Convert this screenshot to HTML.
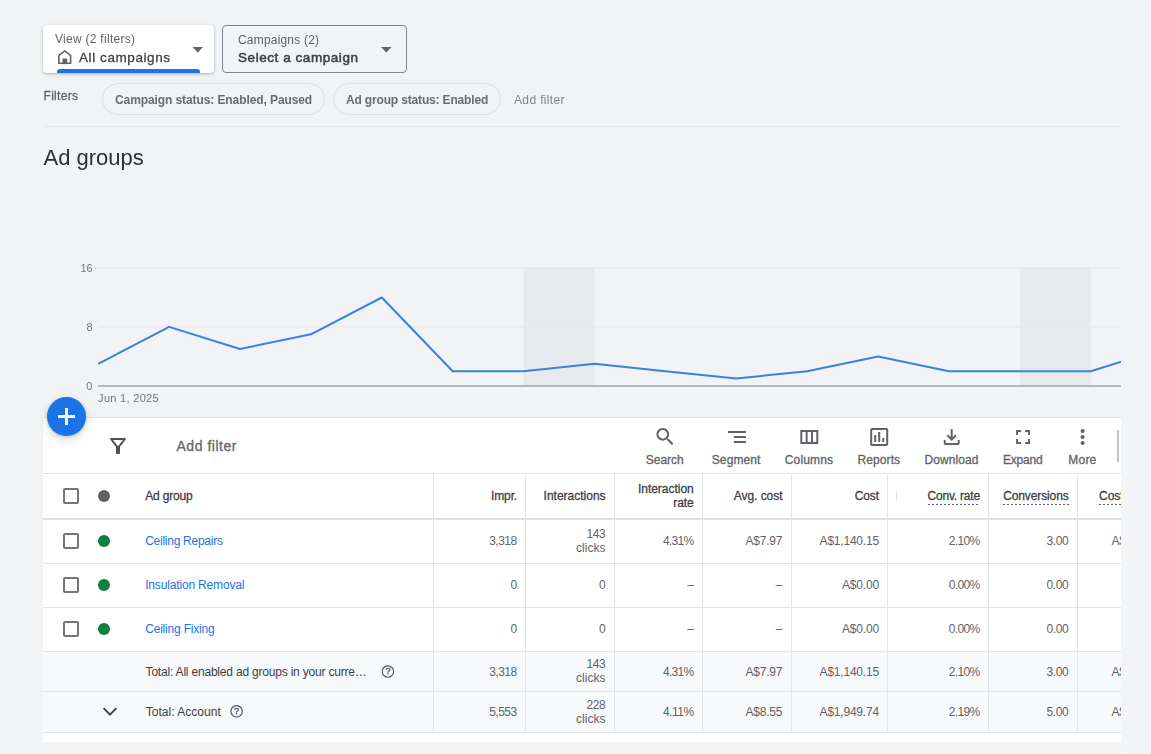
<!DOCTYPE html>
<html><head><meta charset="utf-8">
<style>
html,body{margin:0;padding:0;}
body{width:1151px;height:754px;overflow:hidden;background:#f1f3f4;font-family:"Liberation Sans",sans-serif;position:relative;}
#clip{filter:blur(0.45px);position:absolute;left:0;top:0;width:1121px;height:754px;overflow:hidden;}
#wide{position:absolute;left:0;top:0;width:2000px;height:754px;}
.t{position:absolute;white-space:nowrap;}
.a{position:absolute;}
.vl{position:absolute;width:1px;background:#e3e5e8;top:474px;height:259px;}
.hl{position:absolute;left:43px;width:1078px;height:1px;background:#e2e4e7;}
.cb{position:absolute;left:62.5px;width:12px;height:12px;border:2px solid #757575;border-radius:2px;background:#fff;}
.dot{position:absolute;left:98px;width:12px;height:12px;border-radius:50%;background:#0f8040;}
.ul{position:absolute;height:1.4px;background:repeating-linear-gradient(90deg,#5f6368 0 2px,transparent 2px 4px);top:503.6px;}
</style></head><body>
<div class="a" style="left:1121px;top:424px;width:7px;height:330px;background:#f4f5f7;"></div>
<div id="clip"><div id="wide">

<!-- top selectors -->
<div class="a" style="left:43px;top:25px;width:171px;height:48px;background:#fff;border-radius:4px;box-shadow:0 1px 2px rgba(60,64,67,.22),0 1px 3px 1px rgba(60,64,67,.12);"></div>
<div class="a" style="left:57px;top:69px;width:143px;height:4px;background:#1a73e8;border-radius:3px 3px 0 0;"></div>
<div class="a" style="left:222px;top:25px;width:183px;height:45.5px;border:1px solid #80868b;border-radius:4px;"></div>
<svg class="a" style="left:0;top:0" width="1121" height="130" viewBox="0 0 1121 130">
  <path d="M192.5 47h10.5l-5.25 5.5z" fill="#5f6368"/>
  <path d="M381 47h10.5l-5.25 5.5z" fill="#5f6368"/>
  <!-- home icon -->
  <path d="M58.9 63.3V55.3L64.75 50.9L70.6 55.3V63.3Z" fill="none" stroke="#5f6368" stroke-width="1.6" stroke-linejoin="miter"/>
  <rect x="62.5" y="58.5" width="4.7" height="5.6" fill="#5f6368"/>
</svg>
<!-- chips -->
<div class="a" style="left:101.8px;top:83.2px;width:221px;height:29.6px;border:1px solid #dddfe3;border-radius:16px;"></div>
<div class="a" style="left:332.8px;top:83.2px;width:166.7px;height:29.6px;border:1px solid #dddfe3;border-radius:16px;"></div>
<div class="a" style="left:43.5px;top:125.5px;width:1078px;height:1px;background:#e3e5e8;"></div>

<!-- chart -->
<svg class="a" style="left:0;top:250px" width="1121" height="160" viewBox="0 250 1121 160">
  <rect x="523.7" y="267.6" width="70.7" height="117.6" fill="#e8e9ec"/>
  <rect x="1020.2" y="267.6" width="70.7" height="117.6" fill="#e8e9ec"/>
  <rect x="98" y="267.5" width="1023" height="1" fill="#e6e7ea"/>
  <rect x="98" y="326.4" width="1023" height="1" fill="#e6e7ea"/>
  <rect x="98" y="385" width="1023" height="2" fill="#b5b7b9"/>
  <polyline fill="none" stroke="#3b82e0" stroke-width="2" stroke-linejoin="round" points="98.2,363.8 169.1,326.9 240.0,349.0 310.9,334.3 381.8,297.5 452.7,371.2 523.6,371.2 594.5,363.8 665.4,371.2 736.3,378.5 807.2,371.2 878.1,356.4 949.0,371.2 1019.9,371.2 1090.8,371.2 1161.7,349.0"/>
</svg>

<!-- table panel -->
<div class="a" style="left:43px;top:417px;width:1078px;height:325px;background:#fff;"></div>
<div class="hl" style="top:417px;background:#e3e5e8;"></div>
<div class="a" style="left:43px;top:652px;width:1078px;height:81px;background:#f8f9fa;"></div>
<div class="hl" style="top:473px;"></div>
<div class="hl" style="top:517.5px;height:2px;background:#dddfe3;"></div>
<div class="hl" style="top:563px;"></div>
<div class="hl" style="top:607px;"></div>
<div class="hl" style="top:651px;"></div>
<div class="hl" style="top:691px;"></div>
<div class="hl" style="top:732px;"></div>
<div class="vl" style="left:433px;"></div>
<div class="vl" style="left:525.3px;"></div>
<div class="vl" style="left:614px;"></div>
<div class="vl" style="left:702.3px;"></div>
<div class="vl" style="left:790.5px;"></div>
<div class="vl" style="left:887px;"></div>
<div class="vl" style="left:988.2px;"></div>
<div class="vl" style="left:1077.2px;"></div>
<div class="a" style="left:896px;top:491.5px;width:1px;height:8px;background:#dcdee2;"></div>
<div class="a" style="left:1117.3px;top:430px;width:1.7px;height:31.5px;background:#c0c2c4;"></div>

<!-- checkboxes / dots -->
<div class="cb" style="top:488px;"></div>
<div class="cb" style="top:533.3px;"></div>
<div class="cb" style="top:577.4px;"></div>
<div class="cb" style="top:621.4px;"></div>
<div class="dot" style="top:490px;background:#5f6368;"></div>
<div class="dot" style="top:535.3px;"></div>
<div class="dot" style="top:579.4px;"></div>
<div class="dot" style="top:623.4px;"></div>

<!-- underlines -->
<div class="ul" style="left:927.5px;width:52.6px;"></div>
<div class="ul" style="left:1003.2px;width:65.5px;"></div>
<div class="ul" style="left:1099.1px;width:62px;"></div>

<!-- icons -->
<svg class="a" style="left:0;top:417px" width="1121" height="337" viewBox="0 417 1121 337">
  <!-- filter -->
  <g transform="translate(106,434)" fill="#4d5156"><path d="M7 6h10l-5.01 6.3L7 6zm-2.750-.39C6.270 8.200 10 13 10 13v6c0 .55.45 1 1 1h2c.55 0 1-.45 1-1v-6s3.720-4.800 5.740-7.390A.998.998 0 0 0 18.950 4H5.040c-.83 0-1.300.95-.79 1.610z"/></g>
  <g fill="#5f6368">
  <!-- search -->
  <g transform="translate(653.6,425.2) scale(0.965)"><path d="M15.500 14h-.79l-.28-.27C15.410 12.590 16 11.110 16 9.500 16 5.910 13.090 3 9.500 3S3 5.910 3 9.500 5.910 16 9.500 16c1.610 0 3.090-.59 4.230-1.570l.27.28v.79l5 4.990L20.490 19l-4.990-5zm-6 0C7.010 14 5 11.990 5 9.500S7.010 5 9.500 5 14 7.010 14 9.500 11.990 14 9.500 14z"/></g>
  <!-- segment -->
  <g transform="translate(724.9,425)"><path d="M9 18h12v-2H9v2zM3 6v2h18V6H3zm6 7h12v-2H9v2z"/></g>
  <!-- columns -->
  <g transform="translate(797.3,425)"><path d="M3 5v14h18V5H3zm5.330 12H5V7h3.330v10zm5.340 0h-3.330V7h3.330v10zM19 17h-3.330V7H19v10z"/></g>
  <!-- reports -->
  <g transform="translate(867.2,425)"><path d="M9 17H7v-7h2v7zm4 0h-2V7h2v10zm4 0h-2v-4h2v4zm2 2H5V5h14v14zm0-16H5c-1.100 0-2 .9-2 2v14c0 1.100.9 2 2 2h14c1.100 0 2-.9 2-2V5c0-1.100-.9-2-2-2z"/></g>
  <!-- download -->
  <g transform="translate(939.7,425)"><path d="M12 16l-5-5 1.400-1.450 2.600 2.600V4h2v8.150l2.600-2.600L17 11zm-6 4q-.825 0-1.412-.587T4 18v-3h2v3h12v-3h2v3q0 .825-.587 1.413T18 20z"/></g>
  <!-- expand -->
  <g transform="translate(1011.1,425)"><path d="M7 14H5v5h5v-2H7v-3zm-2-4h2V7h3V5H5v5zm12 7h-3v2h5v-5h-2v3zM14 5v2h3v3h2V5h-5z"/></g>
  <!-- more -->
  <g transform="translate(1070.6,425)"><path d="M12 8c1.100 0 2-.9 2-2s-.9-2-2-2-2 .9-2 2 .9 2 2 2zm0 2c-1.100 0-2 .9-2 2s.9 2 2 2 2-.9 2-2-.9-2-2-2zm0 6c-1.100 0-2 .9-2 2s.9 2 2 2 2-.9 2-2-.9-2-2-2z"/></g>
  </g>
  <!-- chevron -->
  <path d="M103.6 708.2L110 714.6L116.400 708.2" fill="none" stroke="#3c4043" stroke-width="1.9"/>
  <!-- help icons -->
  <g fill="none" stroke="#55595e" stroke-width="1.15">
    <circle cx="387.9" cy="671.5" r="5.700"/>
    <circle cx="236.6" cy="711.3" r="5.700"/>
  </g>
</svg>
<div class="t" style="left:385.4px;top:667.2px;font-size:9px;line-height:9px;color:#3c4043;-webkit-text-stroke:0.25px #3c4043;">?</div>
<div class="t" style="left:234.1px;top:707px;font-size:9px;line-height:9px;color:#3c4043;-webkit-text-stroke:0.25px #3c4043;">?</div>

<!-- FAB -->
<div class="a" style="left:46.8px;top:396.8px;width:39.2px;height:39.2px;border-radius:50%;background:#1a73e8;box-shadow:0 1px 3px rgba(60,64,67,.25),0 4px 8px 2px rgba(60,64,67,.12);"></div>
<div class="a" style="left:57.9px;top:415.2px;width:17px;height:2.4px;background:#fff;"></div>
<div class="a" style="left:65.2px;top:407.9px;width:2.4px;height:17px;background:#fff;"></div>

<div class="t" id="t0" style="top:32.84px;font-size:12px;line-height:12px;color:#5f6368;letter-spacing:0.280px;left:55.00px;">View (2 filters)</div>
<div class="t" id="t1" style="top:50.57px;font-size:13.5px;line-height:13.5px;color:#3c4043;letter-spacing:0.579px;-webkit-text-stroke:0.28px #3c4043;left:79.00px;">All campaigns</div>
<div class="t" id="t2" style="top:34.34px;font-size:12px;line-height:12px;color:#5f6368;letter-spacing:0.191px;left:238.00px;">Campaigns (2)</div>
<div class="t" id="t3" style="top:50.87px;font-size:13.5px;line-height:13.5px;color:#3c4043;letter-spacing:0.558px;-webkit-text-stroke:0.5px #3c4043;left:238.00px;">Select a campaign</div>
<div class="t" id="t4" style="top:90.34px;font-size:12px;line-height:12px;color:#5f6368;letter-spacing:0.305px;-webkit-text-stroke:0.3px #5f6368;left:43.50px;">Filters</div>
<div class="t" id="t5" style="top:94.14px;font-size:12px;line-height:12px;color:#686c71;letter-spacing:-0.092px;font-weight:700;left:115.00px;">Campaign status: Enabled, Paused</div>
<div class="t" id="t6" style="top:94.14px;font-size:12px;line-height:12px;color:#686c71;letter-spacing:-0.162px;font-weight:700;left:346.00px;">Ad group status: Enabled</div>
<div class="t" id="t7" style="top:94.14px;font-size:12px;line-height:12px;color:#80868b;letter-spacing:0.360px;left:514.00px;">Add filter</div>
<div class="t" id="t8" style="top:146.58px;font-size:22px;line-height:22px;color:#2d3034;letter-spacing:0.000px;left:43.50px;">Ad groups</div>
<div class="t" id="t9" style="top:262.69px;font-size:11px;line-height:11px;color:#757575;letter-spacing:-0.050px;right:1907.35px;">16</div>
<div class="t" id="t10" style="top:321.69px;font-size:11px;line-height:11px;color:#757575;right:1907.30px;">8</div>
<div class="t" id="t11" style="top:380.69px;font-size:11px;line-height:11px;color:#757575;right:1907.70px;">0</div>
<div class="t" id="t12" style="top:393.29px;font-size:11px;line-height:11px;color:#757575;letter-spacing:0.300px;left:98.10px;">Jun 1, 2025</div>
<div class="t" id="t13" style="top:439.35px;font-size:14px;line-height:14px;color:#63676c;letter-spacing:0.528px;-webkit-text-stroke:0.3px #63676c;left:176.50px;">Add filter</div>
<div class="t" id="t14" style="top:453.54px;font-size:12px;line-height:12px;color:#5f6368;letter-spacing:-0.046px;-webkit-text-stroke:0.3px #5f6368;left:645.80px;">Search</div>
<div class="t" id="t15" style="top:453.54px;font-size:12px;line-height:12px;color:#5f6368;letter-spacing:0.111px;-webkit-text-stroke:0.3px #5f6368;left:711.75px;">Segment</div>
<div class="t" id="t16" style="top:453.54px;font-size:12px;line-height:12px;color:#5f6368;letter-spacing:0.140px;-webkit-text-stroke:0.3px #5f6368;left:784.80px;">Columns</div>
<div class="t" id="t17" style="top:453.54px;font-size:12px;line-height:12px;color:#5f6368;letter-spacing:0.095px;-webkit-text-stroke:0.3px #5f6368;left:857.50px;">Reports</div>
<div class="t" id="t18" style="top:453.54px;font-size:12px;line-height:12px;color:#5f6368;letter-spacing:0.089px;-webkit-text-stroke:0.3px #5f6368;left:924.50px;">Download</div>
<div class="t" id="t19" style="top:453.54px;font-size:12px;line-height:12px;color:#5f6368;letter-spacing:-0.181px;-webkit-text-stroke:0.3px #5f6368;left:1002.90px;">Expand</div>
<div class="t" id="t20" style="top:453.54px;font-size:12px;line-height:12px;color:#5f6368;letter-spacing:0.219px;-webkit-text-stroke:0.3px #5f6368;left:1068.30px;">More</div>
<div class="t" id="t21" style="top:490.14px;font-size:12px;line-height:12px;color:#3c4043;letter-spacing:-0.158px;-webkit-text-stroke:0.28px #3c4043;left:145.20px;">Ad group</div>
<div class="t" id="t22" style="top:490.14px;font-size:12px;line-height:12px;color:#3c4043;letter-spacing:-0.093px;-webkit-text-stroke:0.28px #3c4043;right:1482.89px;">Impr.</div>
<div class="t" id="t23" style="top:490.14px;font-size:12px;line-height:12px;color:#3c4043;letter-spacing:-0.004px;-webkit-text-stroke:0.28px #3c4043;right:1394.40px;">Interactions</div>
<div class="t" id="t24" style="top:483.14px;font-size:12px;line-height:12px;color:#3c4043;letter-spacing:-0.025px;-webkit-text-stroke:0.28px #3c4043;right:1306.32px;">Interaction</div>
<div class="t" id="t25" style="top:497.14px;font-size:12px;line-height:12px;color:#3c4043;letter-spacing:-0.062px;-webkit-text-stroke:0.28px #3c4043;right:1306.36px;">rate</div>
<div class="t" id="t26" style="top:490.14px;font-size:12px;line-height:12px;color:#3c4043;letter-spacing:-0.055px;-webkit-text-stroke:0.28px #3c4043;right:1217.56px;">Avg. cost</div>
<div class="t" id="t27" style="top:490.14px;font-size:12px;line-height:12px;color:#3c4043;letter-spacing:-0.129px;-webkit-text-stroke:0.28px #3c4043;right:1121.13px;">Cost</div>
<div class="t" id="t28" style="top:490.14px;font-size:12px;line-height:12px;color:#3c4043;letter-spacing:-0.208px;-webkit-text-stroke:0.28px #3c4043;right:1020.11px;">Conv. rate</div>
<div class="t" id="t29" style="top:490.14px;font-size:12px;line-height:12px;color:#3c4043;letter-spacing:-0.120px;-webkit-text-stroke:0.28px #3c4043;right:931.42px;">Conversions</div>
<div class="t" id="t30" style="top:490.14px;font-size:12px;line-height:12px;color:#3c4043;letter-spacing:-0.043px;-webkit-text-stroke:0.28px #3c4043;left:1099.10px;">Cost / conv.</div>
<div class="t" id="t31" style="top:535.14px;font-size:12px;line-height:12px;color:#1a73e8;letter-spacing:-0.262px;left:145.20px;">Ceiling Repairs</div>
<div class="t" id="t32" style="top:579.34px;font-size:12px;line-height:12px;color:#1a73e8;letter-spacing:-0.163px;left:145.20px;">Insulation Removal</div>
<div class="t" id="t33" style="top:623.34px;font-size:12px;line-height:12px;color:#1a73e8;letter-spacing:-0.195px;left:145.20px;">Ceiling Fixing</div>
<div class="t" id="t34" style="top:665.64px;font-size:12px;line-height:12px;color:#3c4043;letter-spacing:-0.197px;left:145.60px;">Total: All enabled ad groups in your curre…</div>
<div class="t" id="t35" style="top:705.84px;font-size:12px;line-height:12px;color:#3c4043;letter-spacing:0.029px;left:145.70px;">Total: Account</div>
<div class="t" id="t36" style="top:535.14px;font-size:12px;line-height:12px;color:#5f6368;letter-spacing:-0.508px;right:1483.31px;">3,318</div>
<div class="t" id="t37" style="top:527.94px;font-size:12px;line-height:12px;color:#5f6368;letter-spacing:-0.516px;right:1394.92px;">143</div>
<div class="t" id="t38" style="top:541.94px;font-size:12px;line-height:12px;color:#5f6368;letter-spacing:0.071px;right:1394.33px;">clicks</div>
<div class="t" id="t39" style="top:535.14px;font-size:12px;line-height:12px;color:#5f6368;letter-spacing:-0.683px;right:1306.48px;">4.31%</div>
<div class="t" id="t40" style="top:535.14px;font-size:12px;line-height:12px;color:#5f6368;letter-spacing:-0.209px;right:1217.71px;">A$7.97</div>
<div class="t" id="t41" style="top:535.14px;font-size:12px;line-height:12px;color:#5f6368;letter-spacing:-0.210px;right:1121.11px;">A$1,140.15</div>
<div class="t" id="t42" style="top:535.14px;font-size:12px;line-height:12px;color:#5f6368;letter-spacing:-0.683px;right:1020.58px;">2.10%</div>
<div class="t" id="t43" style="top:535.14px;font-size:12px;line-height:12px;color:#5f6368;letter-spacing:-0.353px;right:931.65px;">3.00</div>
<div class="t" id="t44" style="top:535.14px;font-size:12px;line-height:12px;color:#5f6368;letter-spacing:-0.270px;left:1111.60px;">A$380.05</div>
<div class="t" id="t45" style="top:579.34px;font-size:12px;line-height:12px;color:#5f6368;right:1482.80px;">0</div>
<div class="t" id="t46" style="top:579.34px;font-size:12px;line-height:12px;color:#5f6368;right:1394.40px;">0</div>
<div class="t" id="t47" style="top:579.34px;font-size:12px;line-height:12px;color:#5f6368;right:1306.10px;">–</div>
<div class="t" id="t48" style="top:579.34px;font-size:12px;line-height:12px;color:#5f6368;right:1217.50px;">–</div>
<div class="t" id="t49" style="top:579.34px;font-size:12px;line-height:12px;color:#5f6368;letter-spacing:-0.189px;right:1121.09px;">A$0.00</div>
<div class="t" id="t50" style="top:579.34px;font-size:12px;line-height:12px;color:#5f6368;letter-spacing:-0.683px;right:1020.58px;">0.00%</div>
<div class="t" id="t51" style="top:579.34px;font-size:12px;line-height:12px;color:#5f6368;letter-spacing:-0.353px;right:931.65px;">0.00</div>
<div class="t" id="t52" style="top:623.34px;font-size:12px;line-height:12px;color:#5f6368;right:1482.80px;">0</div>
<div class="t" id="t53" style="top:623.34px;font-size:12px;line-height:12px;color:#5f6368;right:1394.40px;">0</div>
<div class="t" id="t54" style="top:623.34px;font-size:12px;line-height:12px;color:#5f6368;right:1306.10px;">–</div>
<div class="t" id="t55" style="top:623.34px;font-size:12px;line-height:12px;color:#5f6368;right:1217.50px;">–</div>
<div class="t" id="t56" style="top:623.34px;font-size:12px;line-height:12px;color:#5f6368;letter-spacing:-0.189px;right:1121.09px;">A$0.00</div>
<div class="t" id="t57" style="top:623.34px;font-size:12px;line-height:12px;color:#5f6368;letter-spacing:-0.683px;right:1020.58px;">0.00%</div>
<div class="t" id="t58" style="top:623.34px;font-size:12px;line-height:12px;color:#5f6368;letter-spacing:-0.353px;right:931.65px;">0.00</div>
<div class="t" id="t59" style="top:665.64px;font-size:12px;line-height:12px;color:#5f6368;letter-spacing:-0.508px;right:1483.31px;">3,318</div>
<div class="t" id="t60" style="top:658.24px;font-size:12px;line-height:12px;color:#5f6368;letter-spacing:-0.516px;right:1394.92px;">143</div>
<div class="t" id="t61" style="top:672.24px;font-size:12px;line-height:12px;color:#5f6368;letter-spacing:0.071px;right:1394.33px;">clicks</div>
<div class="t" id="t62" style="top:665.64px;font-size:12px;line-height:12px;color:#5f6368;letter-spacing:-0.683px;right:1306.48px;">4.31%</div>
<div class="t" id="t63" style="top:665.64px;font-size:12px;line-height:12px;color:#5f6368;letter-spacing:-0.209px;right:1217.71px;">A$7.97</div>
<div class="t" id="t64" style="top:665.64px;font-size:12px;line-height:12px;color:#5f6368;letter-spacing:-0.210px;right:1121.11px;">A$1,140.15</div>
<div class="t" id="t65" style="top:665.64px;font-size:12px;line-height:12px;color:#5f6368;letter-spacing:-0.683px;right:1020.58px;">2.10%</div>
<div class="t" id="t66" style="top:665.64px;font-size:12px;line-height:12px;color:#5f6368;letter-spacing:-0.353px;right:931.65px;">3.00</div>
<div class="t" id="t67" style="top:665.64px;font-size:12px;line-height:12px;color:#5f6368;letter-spacing:-0.270px;left:1111.60px;">A$380.05</div>
<div class="t" id="t68" style="top:705.84px;font-size:12px;line-height:12px;color:#5f6368;letter-spacing:-0.508px;right:1483.31px;">5,553</div>
<div class="t" id="t69" style="top:698.64px;font-size:12px;line-height:12px;color:#5f6368;letter-spacing:-0.516px;right:1394.92px;">228</div>
<div class="t" id="t70" style="top:712.64px;font-size:12px;line-height:12px;color:#5f6368;letter-spacing:0.071px;right:1394.33px;">clicks</div>
<div class="t" id="t71" style="top:705.84px;font-size:12px;line-height:12px;color:#5f6368;letter-spacing:-0.460px;right:1306.26px;">4.11%</div>
<div class="t" id="t72" style="top:705.84px;font-size:12px;line-height:12px;color:#5f6368;letter-spacing:-0.209px;right:1217.71px;">A$8.55</div>
<div class="t" id="t73" style="top:705.84px;font-size:12px;line-height:12px;color:#5f6368;letter-spacing:-0.210px;right:1121.11px;">A$1,949.74</div>
<div class="t" id="t74" style="top:705.84px;font-size:12px;line-height:12px;color:#5f6368;letter-spacing:-0.683px;right:1020.58px;">2.19%</div>
<div class="t" id="t75" style="top:705.84px;font-size:12px;line-height:12px;color:#5f6368;letter-spacing:-0.353px;right:931.65px;">5.00</div>
<div class="t" id="t76" style="top:705.84px;font-size:12px;line-height:12px;color:#5f6368;letter-spacing:-0.270px;left:1111.60px;">A$389.95</div>
</div></div>
</body></html>
